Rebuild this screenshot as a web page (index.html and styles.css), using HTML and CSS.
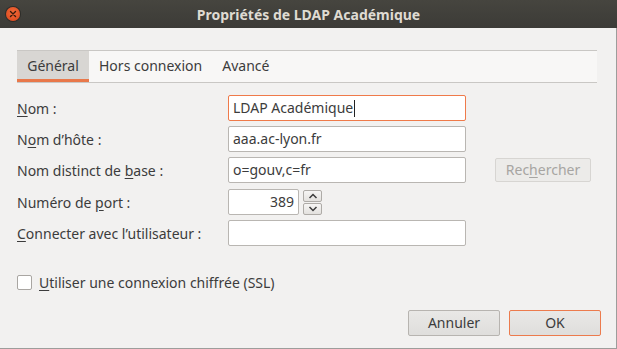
FILE: index.html
```html
<!DOCTYPE html>
<html>
<head>
    <meta charset="UTF-8">
    <title>Propriétés de LDAP Académique</title>
    <link rel="stylesheet" href="styles.css">
</head>
<body>
    <div class="window">
        <div class="titlebar">
            <span class="close">
                <svg width="14" height="14" viewBox="0 0 14 14">
                    <path d="M4.5 4.5 L9.5 9.5 M9.5 4.5 L4.5 9.5" stroke="#3a1a0c" stroke-width="1.4" stroke-linecap="round"/>
                </svg>
            </span>
            <span class="title">Propriétés de LDAP Académique</span>
        </div>
        <div class="content">
            <div class="tabs">
                <span class="tab on">Général</span>
                <span class="tab">Hors connexion</span>
                <span class="tab">Avancé</span>
            </div>
            <div class="form">
                <div class="row">
                    <label><u>N</u>om :</label>
                    <div class="field focus">LDAP Académique<span class="caret"></span></div>
                </div>
                <div class="row">
                    <label>N<u>o</u>m d’hôte :</label>
                    <div class="field">aaa.ac-lyon.fr</div>
                </div>
                <div class="row">
                    <label>Nom distinct de <u>b</u>ase :</label>
                    <div class="field">o=gouv,c=fr</div>
                    <span class="button disabled">Rec<u>h</u>ercher</span>
                </div>
                <div class="row port">
                    <label>Numéro de <u>p</u>ort :</label>
                    <div class="field num">389</div>
                    <div class="spin">
                        <span class="spin-btn">
                            <svg width="12" height="8" viewBox="0 0 12 8"><path d="M2.5 6 L6 2.5 L9.5 6" fill="none" stroke="#3c3c3c" stroke-width="1.5"/></svg>
                        </span>
                        <span class="spin-btn">
                            <svg width="12" height="8" viewBox="0 0 12 8"><path d="M2.5 2 L6 5.5 L9.5 2" fill="none" stroke="#3c3c3c" stroke-width="1.5"/></svg>
                        </span>
                    </div>
                </div>
                <div class="row">
                    <label><u>C</u>onnecter avec l’utilisateur :</label>
                    <div class="field"></div>
                </div>
            </div>
            <div class="check">
                <span class="box"></span>
                <span><u>U</u>tiliser une connexion chiffrée (SSL)</span>
            </div>
            <div class="actions">
                <span class="button">Annuler</span>
                <span class="button default">OK</span>
            </div>
        </div>
    </div>
</body>
</html>
```

FILE: styles.css
```css
* {
    margin: 0;
    padding: 0;
    box-sizing: border-box;
}
body {
    width: 617px;
    height: 349px;
    background-color: #f2f1f0;
    font-family: "Noto Sans", sans-serif;
    font-size: 14px;
    color: #3c3c3c;
    overflow: hidden;
}
u {
    text-decoration: underline;
    text-underline-offset: 2px;
}
/* barre de titre */
.titlebar {
    position: relative;
    height: 28px;
    background: linear-gradient(#46453f, #3c3b37);
    display: flex;
    align-items: center;
    justify-content: center;
}
.titlebar .close {
    position: absolute;
    left: 6px;
    top: 7px;
    width: 14px;
    height: 14px;
    border-radius: 50%;
    background: radial-gradient(circle at 50% 40%, #f26b3a, #d9441a);
    box-shadow: 0 0 0 1px #2d2c29;
    display: flex;
}
.titlebar .title {
    color: #dfdbd2;
    font-weight: bold;
    font-size: 14px;
}
.content {
    height: 321px;
    border-right: 1px solid #9d9d9b;
    border-bottom: 1px solid #9d9d9b;
    padding: 22px 15px 0 17px;
}
/* onglets */
.tabs {
    display: flex;
    width: 580px;
    height: 33px;
    background-color: #f8f7f6;
    border-top: 1px solid #c9c7c4;
    border-bottom: 1px solid #c9c7c4;
}
.tab {
    padding: 0 10px;
    line-height: 29px;
    border-bottom: 2px solid transparent;
}
.tab.on {
    width: 72px;
    text-align: center;
    padding: 0;
    background-color: #d8d6d3;
    border-bottom: 3px solid #e9784a;
}
/* formulaire */
.form {
    margin-top: 12px;
    display: flex;
    flex-direction: column;
    gap: 5px;
}
.row {
    display: flex;
    align-items: center;
    height: 26px;
}
.row label {
    width: 211px;
}
.field {
    width: 238px;
    height: 26px;
    background-color: #fff;
    border: 1px solid #b9b6b2;
    border-radius: 2px;
    padding: 0 4px;
    line-height: 24px;
    display: flex;
    align-items: center;
}
.field.focus {
    border-color: #ef7a4a;
}
.caret {
    display: inline-block;
    width: 1px;
    height: 17px;
    background-color: #222;
    margin-left: 1px;
}
.field.num {
    width: 71px;
    justify-content: flex-end;
    padding-right: 4px;
}
.row.port {
    margin-top: 1px;
}
.spin {
    margin-left: 4px;
    display: flex;
    flex-direction: column;
    gap: 1px;
}
.spin-btn {
    width: 19px;
    height: 12px;
    border: 1px solid #aeaba7;
    border-radius: 2px;
    background: linear-gradient(#f6f5f4, #e3e1de);
    display: flex;
    align-items: center;
    justify-content: center;
}
.button {
    display: inline-block;
    height: 26px;
    line-height: 24px;
    text-align: center;
    border: 1px solid #b7b4b0;
    border-radius: 2px;
    background: linear-gradient(#e9e8e6, #dfdedc);
}
.row .button {
    margin-left: 29px;
    width: 96px;
    height: 24px;
    line-height: 22px;
}
.button.disabled {
    color: #a7a5a2;
    border-color: #d7d5d2;
    background: #ecebe9;
}
/* case a cocher */
.check {
    margin-top: 27px;
    display: flex;
    align-items: center;
    gap: 7px;
}
.check .box {
    width: 15px;
    height: 15px;
    background-color: #fff;
    border: 1px solid #a9a6a2;
    border-radius: 2px;
}
/* boutons du bas */
.actions {
    margin-top: 18px;
    display: flex;
    justify-content: flex-end;
    gap: 9px;
}
.actions .button {
    width: 92px;
}
.button.default {
    border-color: #ec7b4d;
}
```
